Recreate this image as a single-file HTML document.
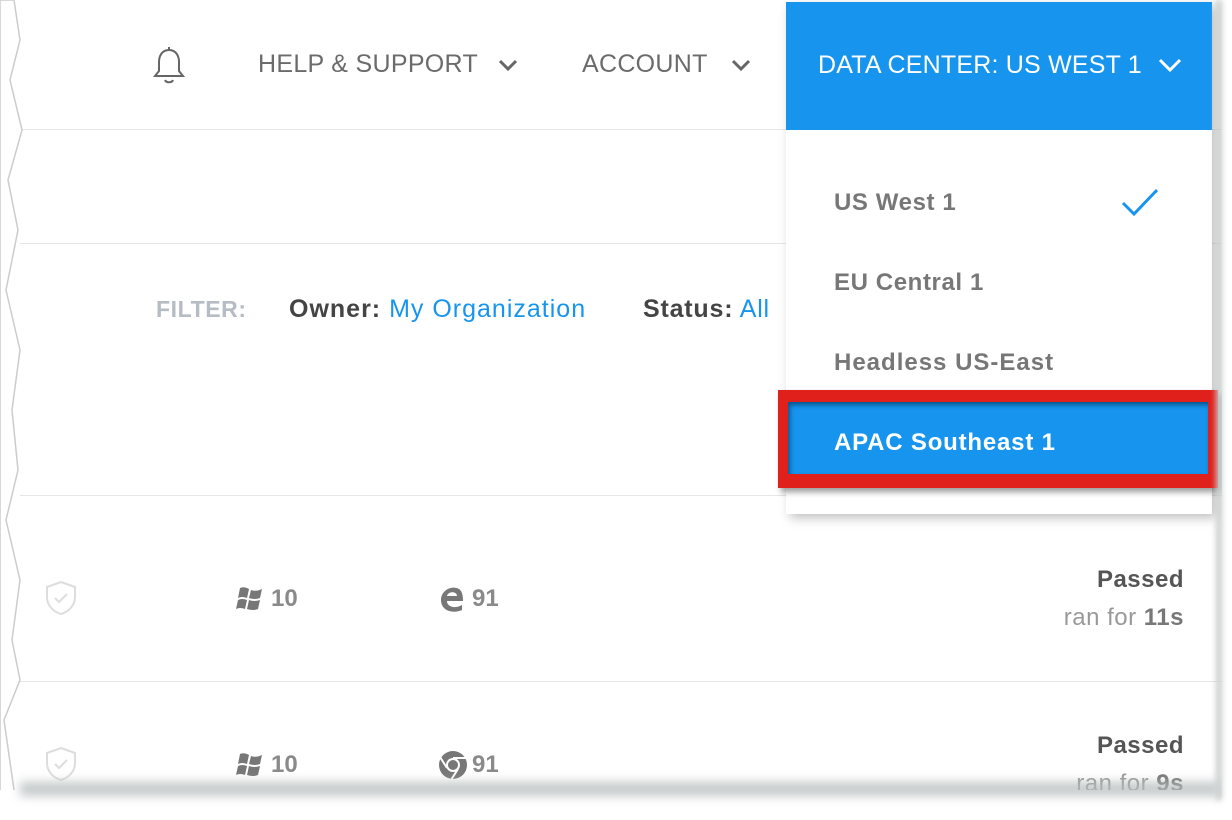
<!DOCTYPE html>
<html><head><meta charset="utf-8"><style>
*{margin:0;padding:0;box-sizing:border-box}
body{width:1232px;height:820px;background:#fff;position:relative;overflow:hidden;font-family:"Liberation Sans",sans-serif}
.a{position:absolute;white-space:nowrap}
.line{position:absolute;left:20px;right:0;height:1px;background:#e6e6e6}
.nav{font-size:25px;color:#6b6b6b;top:50px;letter-spacing:.3px}
.dd{font-size:24px;font-weight:bold;color:#777;letter-spacing:.6px}
.g{color:#8a8a8a;font-weight:bold;font-size:24px}
</style></head><body>
<div class="line" style="top:129px"></div>
<div class="line" style="top:243px"></div>
<div class="line" style="top:495px"></div>
<div class="line" style="top:681px"></div>

<svg class="a" style="left:150px;top:46px" width="38" height="42" viewBox="0 0 38 42"><path d="M19 4c-7 0-10 6-10 12v9l-4 5h28l-4-5v-9c0-6-3-12-10-12z M15 34c1 3 7 3 8 0" fill="none" stroke="#666" stroke-width="2"/><path d="M19 1v3" stroke="#666" stroke-width="2"/></svg>
<div class="a nav" style="left:258px">HELP &amp; SUPPORT</div>
<svg class="a" style="left:497px;top:57px" width="22" height="16"><path d="M3 4l8 8 8-8" fill="none" stroke="#666" stroke-width="3"/></svg>
<div class="a nav" style="left:582px">ACCOUNT</div>
<svg class="a" style="left:730px;top:57px" width="22" height="16"><path d="M3 4l8 8 8-8" fill="none" stroke="#666" stroke-width="3"/></svg>

<div class="a" style="left:156px;top:296px;font-size:23px;font-weight:bold;color:#b6bcc4;letter-spacing:.6px">FILTER:</div>
<div class="a" style="left:289px;top:295px;font-size:25px;color:#444;letter-spacing:1px"><b>Owner:</b> <span style="color:#1795ee">My Organization</span></div>
<div class="a" style="left:643px;top:295px;font-size:25px;color:#444;letter-spacing:.8px"><b>Status:</b> <span style="color:#1795ee">All</span></div>

<svg class="a" style="left:44px;top:580px" width="34" height="36" viewBox="0 0 34 36"><path d="M17 2l14 5v10c0 9-7 15-14 17C10 32 3 26 3 17V7z" fill="none" stroke="#ddd" stroke-width="2"/><path d="M11 18l4 4 8-8" fill="none" stroke="#ddd" stroke-width="2"/></svg>
<svg class="a" style="left:236px;top:586px" width="28" height="26" viewBox="0 0 28 26"><path d="M4 2q4-2 9 1l-2 9q-5-2-9 0z M15 4q5 2 11-1l-2 9q-5 2-11 0z M2 14q4-2 9 0l-2 9q-5-2-9 0z M13 14q5 2 11 0l-2 9q-5 2-11 0z" fill="#777"/></svg>
<div class="a g" style="left:271px;top:585px">10</div>
<svg class="a" style="left:438px;top:585px" width="28" height="28" viewBox="0 0 28 28"><path d="M25 16H9c0 6 8 8 15 4v5c-9 4-21 1-21-10C3 5 14 0 21 4c3 2 4 6 4 12zM9 11h10c0-5-9-5-10 0z" fill="#777"/></svg>
<div class="a g" style="left:472px;top:585px">91</div>
<div class="a" style="right:48px;top:566px;font-size:24px;font-weight:bold;color:#555;letter-spacing:.5px">Passed</div>
<div class="a" style="right:48px;top:604px;font-size:24px;color:#999;letter-spacing:.5px">ran for <b style="color:#777">11s</b></div>

<svg class="a" style="left:44px;top:746px" width="34" height="36" viewBox="0 0 34 36"><path d="M17 2l14 5v10c0 9-7 15-14 17C10 32 3 26 3 17V7z" fill="none" stroke="#ddd" stroke-width="2"/><path d="M11 18l4 4 8-8" fill="none" stroke="#ddd" stroke-width="2"/></svg>
<svg class="a" style="left:236px;top:752px" width="28" height="26" viewBox="0 0 28 26"><path d="M4 2q4-2 9 1l-2 9q-5-2-9 0z M15 4q5 2 11-1l-2 9q-5 2-11 0z M2 14q4-2 9 0l-2 9q-5-2-9 0z M13 14q5 2 11 0l-2 9q-5 2-11 0z" fill="#777"/></svg>
<div class="a g" style="left:271px;top:751px">10</div>
<svg class="a" style="left:438px;top:750px" width="30" height="30" viewBox="0 0 30 30"><circle cx="15" cy="15" r="14" fill="#777"/><circle cx="15" cy="15" r="7" fill="#fff"/><circle cx="15" cy="15" r="5" fill="#777"/><path d="M15 8h13M9 18L2 7M20 19l-7 11" stroke="#fff" stroke-width="2"/></svg>
<div class="a g" style="left:472px;top:751px">91</div>
<div class="a" style="right:48px;top:732px;font-size:24px;font-weight:bold;color:#555;letter-spacing:.5px">Passed</div>
<div class="a" style="right:48px;top:770px;font-size:24px;color:#999;letter-spacing:.5px">ran for <b style="color:#777">9s</b></div>

<div class="a" style="left:786px;top:2px;width:426px;height:512px;background:#fff;box-shadow:4px 4px 10px rgba(0,0,0,.25)"></div>
<div class="a" style="left:786px;top:2px;width:426px;height:128px;background:#1795ee"></div>
<div class="a" style="left:818px;top:51px;font-size:25px;color:#fff;letter-spacing:.2px">DATA CENTER: US WEST 1</div>
<svg class="a" style="left:1157px;top:56px" width="26" height="18"><path d="M3 4l10 10 10-10" fill="none" stroke="#fff" stroke-width="3"/></svg>
<div class="a dd" style="left:834px;top:189px">US West 1</div>
<svg class="a" style="left:1120px;top:186px" width="40" height="32"><path d="M3 17l11 11L37 4" fill="none" stroke="#1795ee" stroke-width="3"/></svg>
<div class="a dd" style="left:834px;top:269px">EU Central 1</div>
<div class="a dd" style="left:834px;top:349px;letter-spacing:1px">Headless US-East</div>
<div class="a" style="left:778px;top:390px;width:440px;height:98px;background:#e0201b;box-shadow:3px 4px 6px rgba(0,0,0,.4)"></div>
<div class="a" style="left:788px;top:402px;width:420px;height:72px;background:#1795ee;box-shadow:inset 2px 3px 5px rgba(0,40,80,.6)"></div>
<div class="a dd" style="left:834px;top:429px;color:#fff;letter-spacing:.8px">APAC Southeast 1</div>

<svg class="a" style="left:0;top:0" width="30" height="820"><path d="M14 0 L20 40 L10 80 L22 130 L8 180 L18 230 L6 290 L20 350 L12 410 L18 470 L6 520 L20 580 L12 640 L20 680 L4 720 L14 790 L0 800 L0 0Z" fill="#fff" stroke="#ccc" stroke-width="1.5"/></svg>
<div class="a" style="left:0;top:790px;width:1232px;height:30px;background:#fff"></div>
<div class="a" style="left:20px;top:782px;width:1200px;height:14px;background:#b5bcbc;filter:blur(5px);opacity:.8"></div>
<div class="a" style="left:1222px;top:0;width:10px;height:820px;background:#fff"></div>
<div class="a" style="left:1216px;top:0;width:6px;height:800px;background:#c8cccc;filter:blur(3px)"></div>
</body></html>
